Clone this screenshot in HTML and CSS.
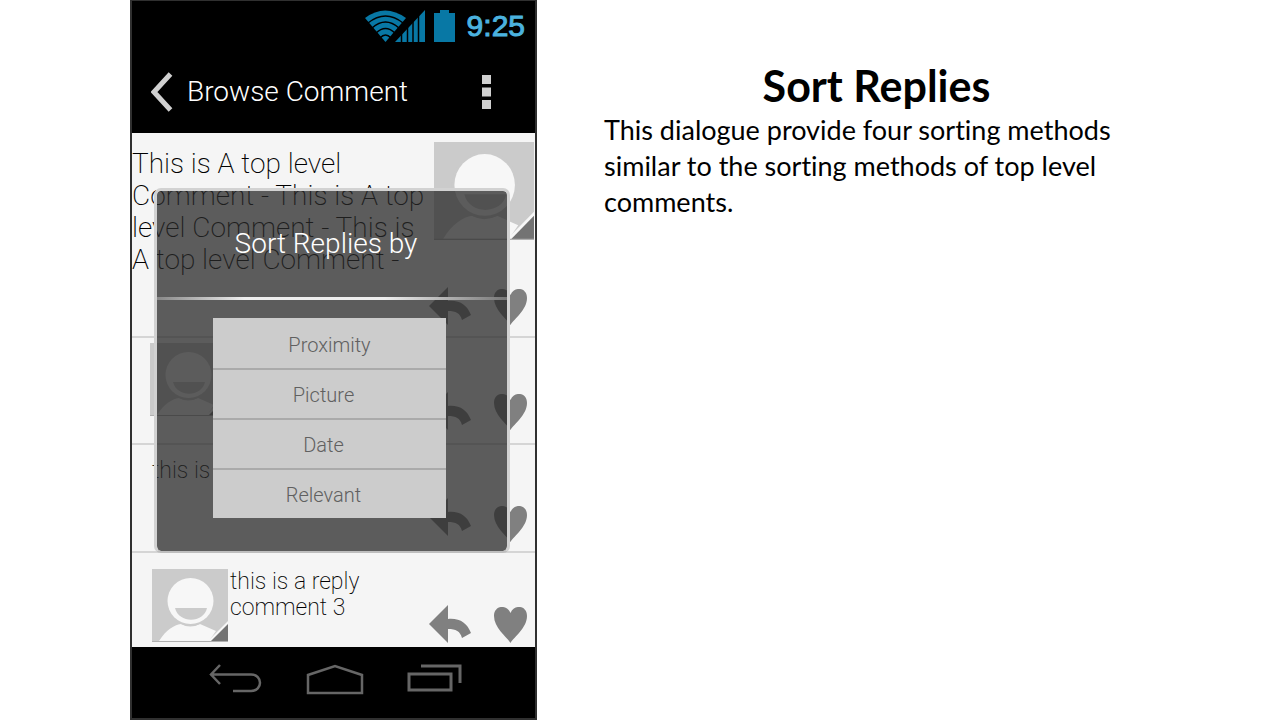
FILE: index.html
```html
<!DOCTYPE html>
<html lang="en">
<head>
<meta charset="utf-8">
<meta name="viewport" content="width=device-width, initial-scale=1">
<title>Sort Replies</title>
<link rel="stylesheet" href="styles.css">
</head>
<body>
<svg class="defs" width="0" height="0" aria-hidden="true">
  <symbol id="avatar" viewBox="0 0 76 73" preserveAspectRatio="none">
    <rect width="76" height="73" fill="#cbcbcb"/>
    <path d="M7 72C14 61 22 56 29 55Q38 60 48 55L64 62L57 72Z" fill="#f7f7f7"/>
    <circle cx="38.500" cy="32" r="25" fill="#cbcbcb"/>
    <circle cx="38.500" cy="32" r="23" fill="#f7f7f7"/>
    <path d="M23 39H55C52 54 27 55 23 39Z" fill="#cbcbcb"/>
    <path d="M55 73L76 52V73Z" fill="#f7f7f7"/>
    <path d="M58 73L76 55V73Z" fill="#737373"/>
    <path d="M0 72H76V73H0Z" fill="#b0b0b0"/>
  </symbol>
  <symbol id="reply" viewBox="0 0 42 38">
    <path d="M0 19L19 0V14C31 13 38 18 42 28L33 33C31 26 27 24 19 24V38Z" fill="#808080"/>
  </symbol>
  <symbol id="heart" viewBox="0 0 33 36">
    <path d="M16.500 36C13 30 0 21 0 9C0-2 13-3 16.500 6C20-3 33-2 33 9C33 21 20 30 16.500 36Z" fill="#808080"/>
  </symbol>
</svg>
<main class="page">
  <section class="phone" aria-label="Browse Comment">
    <div class="status">
      <svg width="60" height="33" viewBox="0 0 60 33" aria-hidden="true">
        <path d="M0 8Q20-7 41 8L20.500 32Z" fill="#0878a5"/>
        <path d="M3 13Q20.500-1 38 13M7 18Q20.500 6 34 18M11 23Q20.500 14 30 23M15 28Q20.500 22 26 28" fill="none" stroke="#000" stroke-width="1.500"/>
        <path d="M30 32L60 0V32Z" fill="#0878a5"/>
        <path d="M36.500 20V32M42.500 15V32M48 10V32M53.500 5V32" stroke="#000" stroke-width="1.500"/>
      </svg>
      <svg width="21" height="32" viewBox="0 0 21 32" aria-hidden="true"><path d="M0 3H6V0H15V3H21V32H0Z" fill="#0878a5"/></svg>
      <time>9:25</time>
    </div>
    <header class="appbar">
      <button type="button" class="back" aria-label="Back"><svg width="22" height="40" viewBox="0 0 22 40"><path d="M19.500 2L3 20L19.500 38" fill="none" stroke="#d0d0d0" stroke-width="5"/></svg></button>
      <h1>Browse Comment</h1>
      <button type="button" class="more" aria-label="More options"><svg width="10" height="34" viewBox="0 0 10 34"><path d="M0 0H9V9H0ZM0 12.500H9V21.500H0ZM0 25H9V34H0Z" fill="#d0d0d0"/></svg></button>
    </header>
    <div class="comments">
      <article class="row row-top">
        <p class="lead">This is A top level<br>Comment - This is A top<br>level Comment - This is<br>A top level Comment -</p>
        <div class="side">
          <svg class="avatar-large"><use href="#avatar"/></svg>
          <div class="actions">
            <button type="button" aria-label="Reply"><svg width="42" height="38"><use href="#reply"/></svg></button>
            <button type="button" aria-label="Like"><svg width="33" height="36"><use href="#heart"/></svg></button>
          </div>
        </div>
      </article>
      <article class="row row-first">
        <svg class="avatar"><use href="#avatar"/></svg>
        <div class="actions">
          <button type="button" aria-label="Reply"><svg width="42" height="38"><use href="#reply"/></svg></button>
          <button type="button" aria-label="Like"><svg width="33" height="36"><use href="#heart"/></svg></button>
        </div>
      </article>
      <article class="row row-second">
        <p>this is</p>
        <div class="actions">
          <button type="button" class="raised" aria-label="Reply"><svg width="42" height="38"><use href="#reply"/></svg></button>
          <button type="button" aria-label="Like"><svg width="33" height="36"><use href="#heart"/></svg></button>
        </div>
      </article>
      <article class="row row-third">
        <svg class="avatar"><use href="#avatar"/></svg>
        <p>this is a reply<br>comment 3</p>
        <div class="actions">
          <button type="button" aria-label="Reply"><svg width="42" height="38"><use href="#reply"/></svg></button>
          <button type="button" aria-label="Like"><svg width="33" height="36"><use href="#heart"/></svg></button>
        </div>
      </article>
      <div class="dialog" role="dialog" aria-labelledby="dialog-title">
        <h2 id="dialog-title">Sort Replies by</h2>
        <div class="divider"></div>
        <div class="options">
          <button type="button" class="centered">Proximity</button>
          <button type="button">Picture</button>
          <button type="button">Date</button>
          <button type="button">Relevant</button>
        </div>
      </div>
    </div>
    <nav class="navbar" aria-label="System">
      <button type="button" aria-label="Back"><svg width="53" height="30" viewBox="0 0 53 30"><path d="M11 1L2 10.500L11 20M2 10.500H42C54 10.500 54 27 42 27H24" fill="none" stroke="#666" stroke-width="2.500"/></svg></button>
      <button type="button" aria-label="Home"><svg width="58" height="31" viewBox="0 0 58 31"><path d="M2 29V11L29 2L56 11V29Z" fill="none" stroke="#666" stroke-width="2.500"/></svg></button>
      <button type="button" aria-label="Recent apps"><svg width="55" height="28" viewBox="0 0 55 28"><path d="M2 10H44V26H2ZM14 2H53V19" fill="none" stroke="#666" stroke-width="3"/></svg></button>
    </nav>
  </section>
  <section class="notes">
    <h2>Sort Replies</h2>
    <p>This dialogue provide four sorting methods similar to the sorting methods of top level comments.</p>
  </section>
</main>
</body>
</html>
```
FILE: styles.css
```css
* { box-sizing: border-box; }
body { margin: 0; background: #fff; color: #000; font-family: Roboto, "Liberation Sans", sans-serif; }
h1, h2, p { margin: 0; }
button { margin: 0; padding: 0; border: 0; background: none; font: inherit; color: inherit; }
svg { display: block; flex: none; }
.defs { position: absolute; }
.page { display: grid; grid-template-columns: 130fr 407fr 67fr 545fr 131fr; min-height: 100vh; }
.phone { grid-column: 2; min-width: 0; display: flex; flex-direction: column; border: 2px solid #303030; border-top-width: 1px; background: #000; }

.status { display: flex; align-items: center; justify-content: flex-end; gap: 9px; height: 50px; padding-right: 10px; }
.status time { margin-left: 3px; font: 30px/36px "Liberation Sans", sans-serif; color: #4bb2df; -webkit-text-stroke: 1px #4bb2df; }
.appbar { display: flex; align-items: center; height: 82px; padding: 0 43px 0 19px; color: #fff; }
.appbar h1 { flex: 1; margin-left: 14px; font-size: 28px; line-height: 36px; font-weight: 300; }

.comments { position: relative; background: #f5f5f5; }
.row { display: flex; border-bottom: 2px solid #d5d5d5; font-size: 23px; line-height: 26px; font-weight: 200; }
.row-top { min-height: 205px; padding: 9px 0 11px; }
.lead { flex: 1; min-width: 0; padding-top: 6px; font-size: 28px; line-height: 32px; white-space: nowrap; }
.side { display: flex; flex-direction: column; justify-content: space-between; align-items: flex-end; }
.avatar-large { width: 100px; height: 98px; margin-right: 1px; }
.avatar { width: 76px; height: 73px; }
.actions { display: flex; align-items: flex-end; gap: 23px; margin-left: auto; padding-right: 8px; }
.row-first { min-height: 107px; padding: 5px 0 13px 18px; }
.row-second { min-height: 108px; padding: 13px 0 9px 20px; }
.raised { margin-bottom: 6px; }
.row-third { min-height: 94px; padding: 16px 0 4px 20px; border-bottom: 0; }
.row-third p { padding-left: 2px; }

.dialog { position: absolute; top: 55px; left: 22px; right: 25px; height: 365px; border: 3px solid #d2d2d2; border-bottom: 2px solid #bebebe; border-radius: 7px; background: rgba(40, 40, 40, 0.75); background-clip: padding-box; color: #fff; }
.dialog h2 { padding: 35px 12px 0 0; font-size: 28px; line-height: 36px; font-weight: 300; text-align: center; }
.divider { height: 3px; margin-top: 35px; background: linear-gradient(90deg, #888, #eee 25%, #eee 65%, #777); }
.options { display: flex; flex-direction: column; margin: 18px 61px 0 56px; background: #ccc; color: #606060; }
.options button { height: 50px; padding: 2px 12px 0 0; border-top: 2px solid #aaa; font-size: 20px; line-height: 24px; font-weight: 300; text-align: center; }
.options .centered { padding: 4px 0 0; border-top: 0; }

.navbar { flex: 1; display: flex; justify-content: space-between; align-items: flex-start; min-height: 71px; padding: 17px 73px 0 77px; }

.notes { grid-column: 4; min-width: 0; padding-top: 60px; font-family: Lato, "Open Sans", sans-serif; font-variant-ligatures: none; }
.notes h2 { font-size: 43px; line-height: 52px; font-weight: 700; text-align: center; }
.notes p { font-size: 27px; line-height: 36px; }
```
